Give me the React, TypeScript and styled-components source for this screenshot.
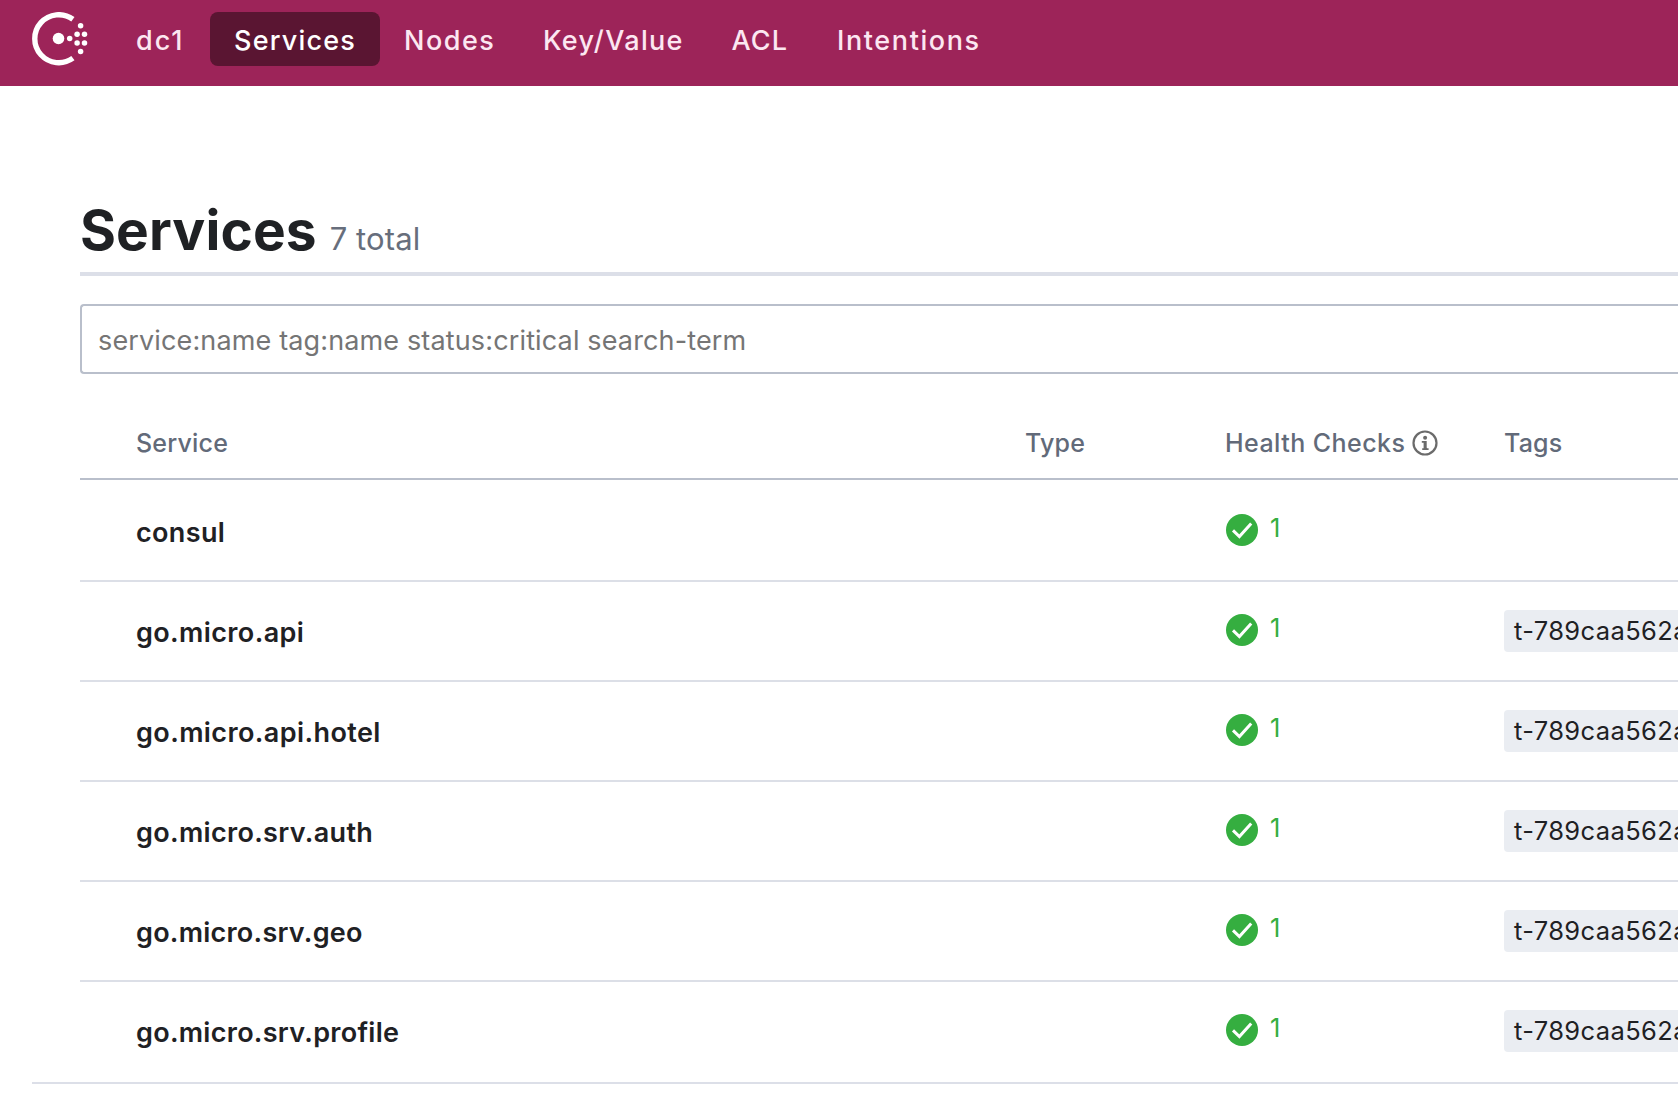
import React from 'react';
import styled, { createGlobalStyle } from 'styled-components';

const GlobalStyle = createGlobalStyle`
  *, *::before, *::after { box-sizing: border-box; }
  html, body { margin: 0; padding: 0; background: #fff; }
  body {
    font-family: Inter, "Liberation Sans", sans-serif;
    color: #1f2124;
    overflow: hidden;
  }
  a { color: inherit; text-decoration: none; }
`;

const Page = styled.div`
  display: flex;
  flex-direction: column;
  width: 100%;
  height: 1100px;
  overflow: hidden;
  background: #fff;
`;

const TopBar = styled.header`
  display: flex;
  flex: none;
  height: 86px;
  padding: 12px 0 0 32px;
  background: #9d2459;
`;

const Logo = styled.svg`
  display: block;
  flex: none;
  width: 56px;
  height: 54px;
  margin-right: 24px;
`;

const Nav = styled.nav`
  display: flex;
  height: 54px;
`;

const NavLink = styled.a<{ $width: number; $spacing: number; $active?: boolean }>`
  flex: none;
  width: ${(p) => p.$width}px;
  height: 54px;
  padding: 1px 0 0 24px;
  border-radius: 8px;
  font-size: 27px;
  font-weight: 500;
  line-height: 55px;
  letter-spacing: ${(p) => p.$spacing}px;
  white-space: nowrap;
  color: ${(p) => (p.$active ? '#fff' : '#fce7f1')};
  background: ${(p) => (p.$active ? '#5a1532' : 'transparent')};
`;

const Main = styled.main`
  display: flex;
  flex-direction: column;
  flex: none;
  padding-left: 80px;
`;

const TitleBar = styled.div`
  display: flex;
  align-items: flex-end;
  height: 190px;
  padding-bottom: 9px;
  border-bottom: 4px solid #dcdfe8;
`;

const Title = styled.h1`
  margin: 0;
  font-size: 55px;
  font-weight: 700;
  line-height: 66px;
  letter-spacing: 0.1px;
`;

const Total = styled.em`
  margin: 0 0 6px 13px;
  font-size: 31px;
  font-style: normal;
  font-weight: 400;
  line-height: 37px;
  letter-spacing: 0.1px;
  color: #676e7c;
`;

const Search = styled.input`
  display: block;
  width: 100%;
  height: 70px;
  margin: 28px 0 0;
  padding: 2px 0 0 16px;
  border: 2px solid #b9bfcb;
  border-right: 0;
  border-radius: 4px 0 0 4px;
  outline: 0;
  background: #fff;
  font-family: inherit;
  font-size: 27px;
  font-weight: 400;
  letter-spacing: 0.14px;
  color: #1f2124;
  &::placeholder { color: #757575; opacity: 1; }
`;

const columns = '889px 200px 279px minmax(0, 1fr)';

const HeadRow = styled.div`
  display: grid;
  grid-template-columns: ${columns};
  align-items: end;
  height: 106px;
  padding: 0 0 20px 56px;
  border-bottom: 2px solid #b9bfcb;
`;

const HeadCell = styled.div<{ $spacing?: number }>`
  display: flex;
  align-items: center;
  gap: 7px;
  height: 30px;
  font-size: 25px;
  font-weight: 500;
  line-height: 30px;
  letter-spacing: ${(p) => p.$spacing ?? 0.2}px;
  white-space: nowrap;
  color: #626a79;
`;

const InfoSvg = styled.svg`
  flex: none;
  width: 26px;
  height: 26px;
`;

const Row = styled.div`
  display: grid;
  grid-template-columns: ${columns};
  align-items: center;
  height: 100px;
  padding-left: 56px;
  border-bottom: 2px solid #dcdfe7;
  &:first-child { height: 102px; padding-top: 2px; }
  &:last-child { border-bottom-color: transparent; }
`;

const Rows = styled.div`
  display: flex;
  flex-direction: column;
`;

const Name = styled.a<{ $spacing: number }>`
  padding-top: 3px;
  font-size: 27px;
  font-weight: 600;
  line-height: 33px;
  letter-spacing: ${(p) => p.$spacing}px;
`;

const Health = styled.div`
  display: flex;
  align-items: center;
  gap: 12px;
  padding-left: 1px;
  margin-bottom: 2px;
  color: #35ae40;
`;

const CheckSvg = styled.svg`
  display: block;
  flex: none;
  width: 32px;
  height: 32px;
`;

const Count = styled.span`
  padding-bottom: 5px;
  font-size: 25.5px;
  line-height: 30px;
`;

const Tag = styled.span`
  height: 42px;
  padding-left: 10px;
  border-radius: 4px 0 0 4px;
  background: #eaedf2;
  font-size: 25.5px;
  line-height: 42px;
  letter-spacing: 0.38px;
  white-space: nowrap;
`;

const Footer = styled.footer`
  flex: none;
  height: 18px;
  margin-left: 32px;
  border-top: 2px solid #dcdfe8;
`;

const nav = [
  { label: 'dc1', width: 98, spacing: 2 },
  { label: 'Services', width: 170, spacing: 1.2, active: true },
  { label: 'Nodes', width: 139, spacing: 1.5 },
  { label: 'Key/Value', width: 188.5, spacing: 1.33 },
  { label: 'ACL', width: 105.5, spacing: 1.1 },
  { label: 'Intentions', width: 190, spacing: 1.6 },
];

const services = [
  { name: 'consul', spacing: 0.35 },
  { name: 'go.micro.api', spacing: 0.38, tag: 't-789caa562a' },
  { name: 'go.micro.api.hotel', spacing: 0.4, tag: 't-789caa562a' },
  { name: 'go.micro.srv.auth', spacing: 0.32, tag: 't-789caa562a' },
  { name: 'go.micro.srv.geo', spacing: 0.24, tag: 't-789caa562a' },
  { name: 'go.micro.srv.profile', spacing: 0.28, tag: 't-789caa562a' },
];

const dots = [
  [37.7, 26.6],
  [45.1, 22.2],
  [52.5, 22.2],
  [45.1, 31],
  [52.5, 31],
  [48.6, 13.8],
  [48.6, 39.4],
];

function ConsulLogo() {
  return (
    <Logo viewBox="0 0 56 54" fill="#fff" aria-label="Consul">
      <path d="M40.9 7.3A24 24 0 1 0 40.9 46.1" fill="none" stroke="#fff" strokeWidth="5.4" />
      <circle cx="26.5" cy="26.5" r="5.8" />
      {dots.map(([x, y]) => (
        <circle key={`${x}-${y}`} cx={x} cy={y} r="2.75" />
      ))}
    </Logo>
  );
}

function InfoIcon() {
  return (
    <InfoSvg viewBox="0 0 26 26" fill="#6b6b6b">
      <circle cx="13" cy="13" r="11.5" fill="none" stroke="#6b6b6b" strokeWidth="2.2" />
      <circle cx="13.1" cy="7.8" r="2" />
      <path d="M9.8 11h4.9v6.5q0 .7.7.7h1.2v1.8h-6.4v-1.8h1.4V12.8H9.8z" />
    </InfoSvg>
  );
}

function CheckIcon() {
  return (
    <CheckSvg viewBox="0 0 32 32">
      <circle cx="16" cy="16" r="16" fill="#35ae40" />
      <path d="M7 16.4l6.4 6.1L25.2 9.4" fill="none" stroke="#fff" strokeWidth="3" />
    </CheckSvg>
  );
}

export default function App() {
  return (
    <Page>
      <GlobalStyle />
      <TopBar>
        <ConsulLogo />
        <Nav>
          {nav.map((n) => (
            <NavLink key={n.label} href="#" $width={n.width} $spacing={n.spacing} $active={n.active}>
              {n.label}
            </NavLink>
          ))}
        </Nav>
      </TopBar>
      <Main>
        <TitleBar>
          <Title>Services</Title>
          <Total>7 total</Total>
        </TitleBar>
        <Search placeholder="service:name tag:name status:critical search-term" />
        <HeadRow>
          <HeadCell>Service</HeadCell>
          <HeadCell>Type</HeadCell>
          <HeadCell $spacing={0.45}>
            Health Checks
            <InfoIcon />
          </HeadCell>
          <HeadCell>Tags</HeadCell>
        </HeadRow>
        <Rows>
          {services.map((s) => (
            <Row key={s.name}>
              <Name href="#" $spacing={s.spacing}>{s.name}</Name>
              <span />
              <Health>
                <CheckIcon />
                <Count>1</Count>
              </Health>
              {s.tag && <Tag>{s.tag}</Tag>}
            </Row>
          ))}
        </Rows>
      </Main>
      <Footer />
    </Page>
  );
}
